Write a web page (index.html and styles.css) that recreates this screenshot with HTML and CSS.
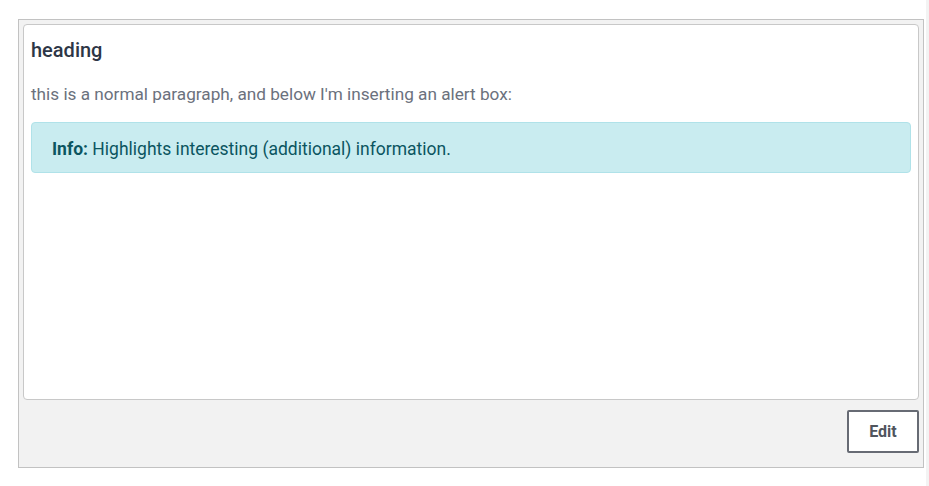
FILE: index.html
```html
<!DOCTYPE html>
<html lang="en">
<head>
<meta charset="utf-8">
<title>Alert box</title>
<link rel="stylesheet" href="styles.css">
</head>
<body>
<div class="page">
  <div class="panel">
    <div class="content">
      <h2 class="heading">heading</h2>
      <p class="para">this is a normal paragraph, and below I'm inserting an alert box:</p>
      <div class="alert"><strong>Info:</strong> Highlights interesting (additional) information.</div>
    </div>
    <div class="footer">
      <button class="edit-btn" type="button">Edit</button>
    </div>
  </div>
</div>
<div class="stripe"></div>
</body>
</html>
```

FILE: styles.css
```css
html, body {
  margin: 0;
  padding: 0;
  background: #ffffff;
}
body {
  display: flex;
  height: 100vh;
  font-family: Roboto, "Liberation Sans", sans-serif;
}
.page {
  padding: 19px 0 0 18px;
}
.panel {
  box-sizing: border-box;
  width: 906px;
  height: 449px;
  border: 1px solid #c2c2c2;
  background: #f2f2f2;
  padding: 4px 4px 14px 4px;
  display: flex;
  flex-direction: column;
}
.content {
  box-sizing: border-box;
  height: 376px;
  background: #ffffff;
  border: 1px solid #c8c8c8;
  border-radius: 4px;
  padding: 12px 7px;
}
.heading {
  margin: 0 0 18px 0;
  font-size: 20px;
  line-height: 27px;
  font-weight: 500;
  color: #2d3646;
}
.para {
  margin: 0 0 16px 0;
  font-size: 17.2px;
  line-height: 24px;
  color: #6b717d;
}
.alert {
  background: #c9ecf0;
  border: 1px solid #b0e2e9;
  border-radius: 4px;
  padding: 14px 20px 11px 20px;
  font-size: 17.5px;
  line-height: 24px;
  color: #0b5560;
}
.alert strong {
  font-weight: 700;
}
.footer {
  margin-top: 10px;
  display: flex;
  justify-content: flex-end;
}
.edit-btn {
  box-sizing: border-box;
  width: 72px;
  height: 43px;
  background: #ffffff;
  border: 2px solid #676b74;
  border-radius: 2px;
  font-family: Roboto, "Liberation Sans", sans-serif;
  font-size: 16px;
  font-weight: 700;
  color: #50555d;
  padding: 0;
}
.stripe {
  margin-left: auto;
  width: 3px;
  background: #f3f3f3;
}
```
